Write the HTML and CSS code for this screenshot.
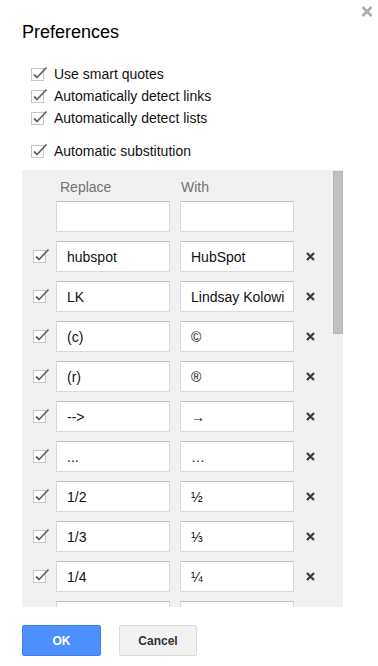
FILE: index.html
```html
<!DOCTYPE html>
<html>
<head>
<meta charset="utf-8">
<link rel="stylesheet" href="styles.css">
</head>
<body>
<div class="dialog">
  <button class="close" aria-label="Close">
    <svg width="12" height="11" viewBox="0 0 12 11"><path d="M1.5 1 L10.5 10 M10.5 1 L1.5 10" stroke="#adadad" stroke-width="2.6" fill="none"/></svg>
  </button>
  <h1 class="title">Preferences</h1>
  <div class="options">
    <label class="opt"><svg class="cb" width="13" height="13" viewBox="0 0 13 13"><rect x="0.5" y="0.5" width="12" height="12" fill="#fff" stroke="#c6c6c6"/><path d="M3 6.5 L6 9.5 L15.5 -0.5" stroke="#666" stroke-width="1.8" fill="none"/></svg><span>Use smart quotes</span></label>
    <label class="opt"><svg class="cb" width="13" height="13" viewBox="0 0 13 13"><rect x="0.5" y="0.5" width="12" height="12" fill="#fff" stroke="#c6c6c6"/><path d="M3 6.5 L6 9.5 L15.5 -0.5" stroke="#666" stroke-width="1.8" fill="none"/></svg><span>Automatically detect links</span></label>
    <label class="opt"><svg class="cb" width="13" height="13" viewBox="0 0 13 13"><rect x="0.5" y="0.5" width="12" height="12" fill="#fff" stroke="#c6c6c6"/><path d="M3 6.5 L6 9.5 L15.5 -0.5" stroke="#666" stroke-width="1.8" fill="none"/></svg><span>Automatically detect lists</span></label>
    <label class="opt opt-sub"><svg class="cb" width="13" height="13" viewBox="0 0 13 13"><rect x="0.5" y="0.5" width="12" height="12" fill="#fff" stroke="#c6c6c6"/><path d="M3 6.5 L6 9.5 L15.5 -0.5" stroke="#666" stroke-width="1.8" fill="none"/></svg><span>Automatic substitution</span></label>
  </div>
  <div class="panel">
    <div class="scrollbar"></div>
    <div class="grid head">
      <span></span><span class="h1">Replace</span><span class="h2">With</span><span></span>
    </div>
    <div class="grid row">
      <span></span><input class="field" type="text" value=""><input class="field" type="text" value=""><span></span>
    </div>
    <div id="rows"></div>
  </div>
  <div class="actions">
    <button class="btn ok">OK</button>
    <button class="btn cancel">Cancel</button>
  </div>
</div>
<script src="app.js"></script>
</body>
</html>
```

FILE: app.js
```js
var data = [
  ["hubspot", "HubSpot"],
  ["LK", "Lindsay Kolowich"],
  ["(c)", "\u00a9"],
  ["(r)", "\u00ae"],
  ["-->", "\u2192"],
  ["...", "\u2026"],
  ["1/2", "\u00bd"],
  ["1/3", "\u2153"],
  ["1/4", "\u00bc"],
  ["1/5", "\u2155"],
  ["1/6", "\u2159"]
];
var cb = '<svg class="cb rcb" width="13" height="13" viewBox="0 0 13 13"><rect x="0.5" y="0.5" width="12" height="12" fill="#fff" stroke="#c6c6c6"/><path d="M3 6.5 L6 9.5 L15.5 -0.5" stroke="#666" stroke-width="1.8" fill="none"/></svg>';
var del = '<svg class="del" width="9" height="9" viewBox="0 0 9 9"><path d="M1 1 L8 8 M8 1 L1 8" stroke="#3f3f3f" stroke-width="2.3" fill="none"/></svg>';
var host = document.getElementById("rows");
data.forEach(function (d) {
  var row = document.createElement("div");
  row.className = "grid row";
  row.innerHTML = cb + '<input class="field" type="text"><input class="field" type="text">' + del;
  var inputs = row.querySelectorAll("input");
  inputs[0].value = d[0];
  inputs[1].value = d[1];
  host.appendChild(row);
});
```

FILE: styles.css
```css
html, body {
  margin: 0;
  padding: 0;
  background: #fff;
}
body {
  font-family: Arial, "Liberation Sans", sans-serif;
  color: #222;
}
.dialog {
  position: relative;
  padding: 21px 22px 0 22px;
  width: 378px;
  height: 666px;
  box-sizing: border-box;
  overflow: hidden;
}
.close {
  position: absolute;
  top: 6px;
  right: 5px;
  border: 0;
  background: none;
  padding: 0;
  width: 12px;
  height: 11px;
  display: block;
}
.close svg { display: block; }
.title {
  margin: 0;
  font-size: 18px;
  line-height: 22px;
  font-weight: normal;
  color: #000;
}
.options {
  margin-top: 20px;
  display: flex;
  flex-direction: column;
}
.opt {
  display: flex;
  align-items: center;
  height: 22px;
  padding-left: 9px;
  font-size: 14px;
  color: #111;
}
.opt span { margin-left: 10px; }
.opt-sub { margin-top: 11px; }
.cb { display: block; overflow: visible; flex: none; }
.panel {
  position: relative;
  margin-top: 8px;
  width: 321px;
  height: 437px;
  background: #f1f1f1;
  overflow: hidden;
}
.scrollbar {
  position: absolute;
  right: 0;
  top: 1px;
  width: 10px;
  height: 163px;
  background: #c1c1c1;
  box-shadow: inset 0 0 0 1px #b6b6b6;
}
.grid {
  display: grid;
  grid-template-columns: 13px 114px 114px 9px;
  column-gap: 10px;
  padding-left: 11px;
  align-items: center;
}
.grid > :nth-child(4) { margin-left: 2px; }
.head {
  padding-top: 9px;
  height: 16px;
  font-size: 14px;
  line-height: 16px;
  color: #737373;
}
.head .h1 { padding-left: 4px; }
.head .h2 { padding-left: 1px; }
.row {
  margin-top: 9px;
}
.head + .row { margin-top: 6px; }
.field {
  box-sizing: border-box;
  width: 114px;
  height: 31px;
  margin: 0;
  padding: 0 8px 0 10px;
  border: 1px solid #d9d9d9;
  border-top-color: #c0c0c0;
  background: #fff;
  font-family: Arial, "Liberation Sans", sans-serif;
  font-size: 14px;
  color: #111;
  outline: none;
}
.del { display: block; }
.actions {
  display: flex;
  gap: 18px;
  margin-top: 18px;
}
.btn {
  box-sizing: border-box;
  height: 31px;
  margin: 0;
  padding: 0;
  border-radius: 2px;
  font-family: Arial, "Liberation Sans", sans-serif;
  font-size: 12px;
  font-weight: bold;
}
.ok {
  width: 79px;
  background: #4d8ffb;
  border: 1px solid #3f7ff0;
  color: #fff;
}
.cancel {
  width: 78px;
  background: #f2f2f2;
  border: 1px solid #dcdcdc;
  color: #333;
}
```
